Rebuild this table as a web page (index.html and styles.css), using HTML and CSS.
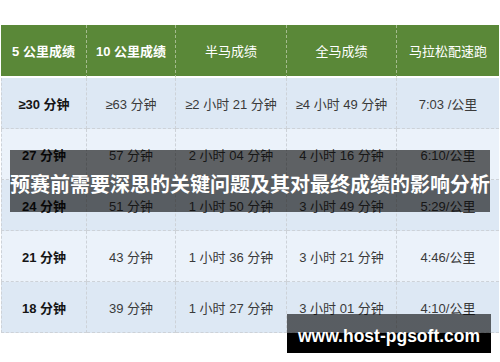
FILE: index.html
```html
<!DOCTYPE html>
<html lang="zh-CN">
<head>
<meta charset="utf-8">
<title>马拉松成绩对照</title>
<link rel="stylesheet" href="styles.css">
</head>
<body>
<div class="page">
  <table class="pace">
    <colgroup>
      <col class="c1"><col class="c2"><col class="c3"><col class="c4"><col class="c5">
    </colgroup>
    <thead>
      <tr>
        <th class="bold">5 公里成绩</th>
        <th class="bold">10 公里成绩</th>
        <th>半马成绩</th>
        <th>全马成绩</th>
        <th>马拉松配速跑</th>
      </tr>
    </thead>
    <tbody>
      <tr class="odd"><td class="first">≥30 分钟</td><td>≥63 分钟</td><td>≥2 小时 21 分钟</td><td>≥4 小时 49 分钟</td><td>7:03 /公里</td></tr>
      <tr class="even"><td class="first">27 分钟</td><td>57 分钟</td><td>2 小时 04 分钟</td><td>4 小时 16 分钟</td><td>6:10/公里</td></tr>
      <tr class="odd"><td class="first">24 分钟</td><td>51 分钟</td><td>1 小时 50 分钟</td><td>3 小时 49 分钟</td><td>5:29/公里</td></tr>
      <tr class="even"><td class="first">21 分钟</td><td>43 分钟</td><td>1 小时 36 分钟</td><td>3 小时 21 分钟</td><td>4:46/公里</td></tr>
      <tr class="odd"><td class="first">18 分钟</td><td>39 分钟</td><td>1 小时 27 分钟</td><td>3 小时 01 分钟</td><td>4:10/公里</td></tr>
    </tbody>
  </table>
  <div class="title-bar">预赛前需要深思的关键问题及其对最终成绩的影响分析</div>
  <div class="watermark">www.host-pgsoft.com</div>
</div>
</body>
</html>
```
FILE: styles.css
```css
html, body {
  margin: 0;
  padding: 0;
  background: #ffffff;
}
.page {
  position: relative;
  width: 500px;
  height: 362px;
  padding: 25px 0 0 1px;
  box-sizing: border-box;
  font-family: "Liberation Sans", "Noto Sans CJK SC", sans-serif;
}
.pace {
  width: 498px;
  table-layout: fixed;
  border-collapse: separate;
  border-spacing: 0;
  font-size: 13px;
}
.c1 { width: 86px; }
.c2 { width: 89px; }
.c3 { width: 111px; }
.c4 { width: 110px; }
.c5 { width: 102px; }
.pace th {
  height: 51px;
  padding: 0;
  background: #5a8838;
  color: #ffffff;
  font-weight: normal;
  border-right: 1px dashed #a4bb8e;
  border-bottom: 2px solid #ffffff;
  text-align: center;
  vertical-align: middle;
}
.pace th:last-child { border-right: none; }
.pace th.bold { font-weight: bold; }
.pace td {
  height: 50px;
  padding: 0;
  box-sizing: content-box;
  text-align: center;
  vertical-align: middle;
  color: #3a3a3a;
  border-right: 1px dashed #cdd2d8;
  border-bottom: 1px dashed #cdd2d8;
}
.pace td:first-child { border-left: 1px dashed #cdd2d8; }
.pace td:last-child { border-right: none; }
.pace td.first {
  font-weight: bold;
  color: #151515;
}
.pace tr.odd td { background: #dde8f4; }
.pace tr.even td { background: #ebf2fa; }
.title-bar {
  position: absolute;
  left: 10px;
  top: 150px;
  width: 480px;
  height: 62px;
  background: rgba(0, 0, 0, 0.6);
  color: #ffffff;
  font-family: "Noto Sans CJK SC", sans-serif;
  font-weight: bold;
  font-size: 20px;
  line-height: 68px;
  text-align: center;
  white-space: nowrap;
}
.watermark {
  position: absolute;
  left: 287px;
  top: 314px;
  width: 204px;
  height: 39px;
  background: linear-gradient(to bottom, rgba(0, 0, 0, 0.6) 0, rgba(0, 0, 0, 0.6) 19px, #000000 19px);
  color: #ffffff;
  font-family: "Liberation Sans", sans-serif;
  font-weight: bold;
  font-size: 17.5px;
  line-height: 45px;
  text-align: center;
  white-space: nowrap;
}
```
